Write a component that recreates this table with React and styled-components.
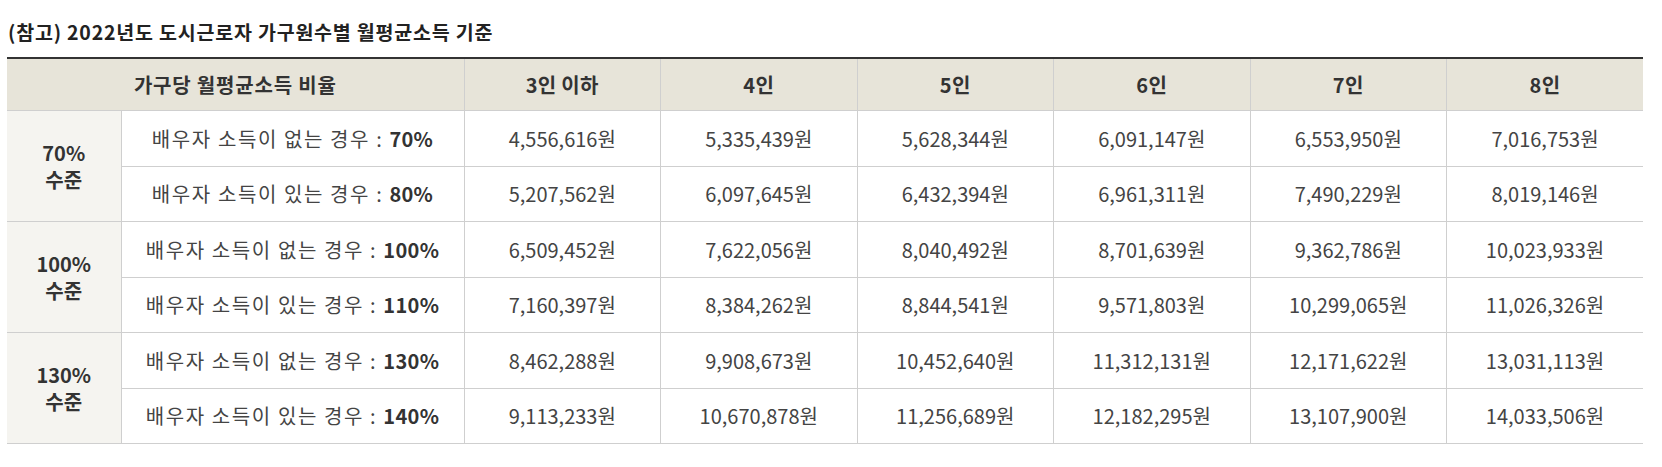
import React from "react";
import styled, { createGlobalStyle } from "styled-components";

const Global = createGlobalStyle`
  html, body { margin: 0; padding: 0; background: #fff; }
  body { font-family: "Noto Sans CJK KR", "Noto Sans", sans-serif; color: #333; }
`;

const Wrap = styled.section`
  padding: 20px 0 0 7px;
`;

const Title = styled.h3`
  margin: 0 0 13px 1px;
  font-size: 19.5px;
  font-weight: 700;
  color: #222;
  line-height: 24px;
  letter-spacing: 0.8px;
`;

const Table = styled.table`
  width: 1636px;
  border-collapse: collapse;
  table-layout: fixed;
  border-top: 2px solid #333;
  font-size: 20px;
`;

const HeadCell = styled.th`
  background: #e7e4d9;
  height: 51px;
  padding: 0;
  border-right: 1px solid #cfcfcf;
  border-bottom: 1px solid #cfcfcf;
  font-weight: 700;
  color: #333;
  text-align: center;
  letter-spacing: ${(p) => (p.$wide ? "0.8px" : "0.3px")};
  &:last-child { border-right: none; }
`;

const GroupCell = styled.th`
  background: #f5f4f0;
  font-weight: 700;
  color: #333;
  line-height: 27px;
  padding: 0;
  border-right: 1px solid #cfcfcf;
  border-bottom: 1px solid #cfcfcf;
  text-align: center;
`;

const LabelCell = styled.td`
  height: 54.5px;
  padding: 0;
  text-align: center;
  color: #444;
  letter-spacing: 1.6px;
  border-right: 1px solid #cfcfcf;
  border-bottom: 1px solid #cfcfcf;
  b { color: #333; font-weight: 700; letter-spacing: 0.3px; }
`;

const ValueCell = styled.td`
  padding: 0;
  text-align: center;
  color: #444;
  border-right: 1px solid #cfcfcf;
  border-bottom: 1px solid #cfcfcf;
  &:last-child { border-right: none; }
`;

const heads = ["3인 이하", "4인", "5인", "6인", "7인", "8인"];

const groups = [
  {
    level: "70%",
    rows: [
      { kind: "없는", pct: "70%", vals: ["4,556,616", "5,335,439", "5,628,344", "6,091,147", "6,553,950", "7,016,753"] },
      { kind: "있는", pct: "80%", vals: ["5,207,562", "6,097,645", "6,432,394", "6,961,311", "7,490,229", "8,019,146"] },
    ],
  },
  {
    level: "100%",
    rows: [
      { kind: "없는", pct: "100%", vals: ["6,509,452", "7,622,056", "8,040,492", "8,701,639", "9,362,786", "10,023,933"] },
      { kind: "있는", pct: "110%", vals: ["7,160,397", "8,384,262", "8,844,541", "9,571,803", "10,299,065", "11,026,326"] },
    ],
  },
  {
    level: "130%",
    rows: [
      { kind: "없는", pct: "130%", vals: ["8,462,288", "9,908,673", "10,452,640", "11,312,131", "12,171,622", "13,031,113"] },
      { kind: "있는", pct: "140%", vals: ["9,113,233", "10,670,878", "11,256,689", "12,182,295", "13,107,900", "14,033,506"] },
    ],
  },
];

export default function App() {
  return (
    <Wrap>
      <Global />
      <Title>(참고) 2022년도 도시근로자 가구원수별 월평균소득 기준</Title>
      <Table>
        <colgroup>
          <col style={{ width: "114px" }} />
          <col style={{ width: "343px" }} />
          <col />
          <col />
          <col />
          <col />
          <col />
          <col />
        </colgroup>
        <thead>
          <tr>
            <HeadCell colSpan={2} $wide>
              가구당 월평균소득 비율
            </HeadCell>
            {heads.map((h) => (
              <HeadCell key={h}>{h}</HeadCell>
            ))}
          </tr>
        </thead>
        <tbody>
          {groups.map((g) =>
            g.rows.map((r, i) => (
              <tr key={g.level + i}>
                {i === 0 && (
                  <GroupCell rowSpan={2}>
                    {g.level}
                    <br />
                    수준
                  </GroupCell>
                )}
                <LabelCell>
                  배우자 소득이 {r.kind} 경우 : <b>{r.pct}</b>
                </LabelCell>
                {r.vals.map((v, j) => (
                  <ValueCell key={j}>{v}원</ValueCell>
                ))}
              </tr>
            ))
          )}
        </tbody>
      </Table>
    </Wrap>
  );
}
